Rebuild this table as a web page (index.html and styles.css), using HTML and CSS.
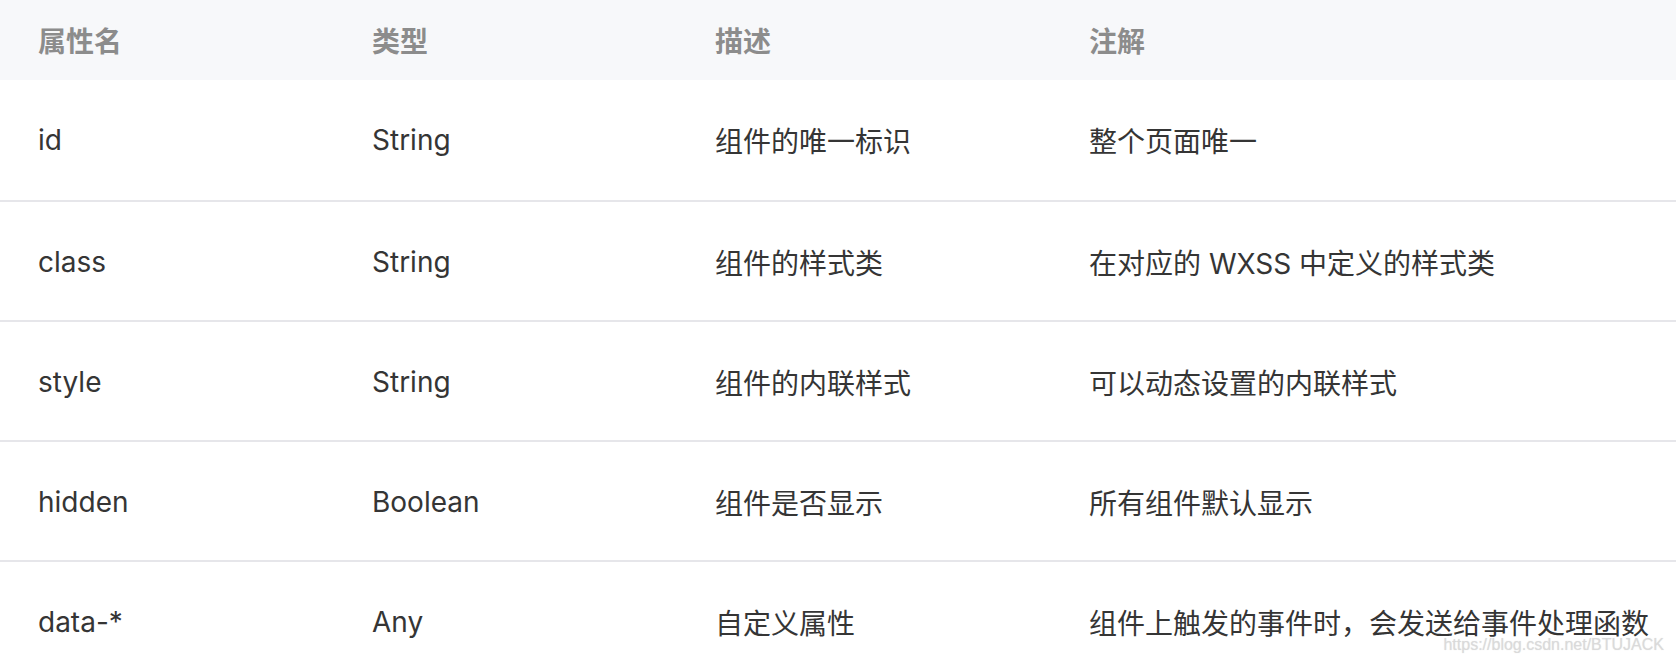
FILE: index.html
```html
<!DOCTYPE html>
<html lang="zh-CN">
<head>
<meta charset="utf-8">
<title>属性表</title>
<link rel="stylesheet" href="styles.css">
</head>
<body>
<div class="wrap">
<table class="attr-table">
  <colgroup>
    <col class="c1"><col class="c2"><col class="c3"><col class="c4">
  </colgroup>
  <thead>
    <tr><th>属性名</th><th>类型</th><th>描述</th><th>注解</th></tr>
  </thead>
  <tbody>
    <tr><td>id</td><td>String</td><td>组件的唯一标识</td><td>整个页面唯一</td></tr>
    <tr><td>class</td><td>String</td><td>组件的样式类</td><td>在对应的 WXSS 中定义的样式类</td></tr>
    <tr><td>style</td><td>String</td><td>组件的内联样式</td><td>可以动态设置的内联样式</td></tr>
    <tr><td>hidden</td><td>Boolean</td><td>组件是否显示</td><td>所有组件默认显示</td></tr>
    <tr><td>data-*</td><td>Any</td><td>自定义属性</td><td>组件上触发的事件时，会发送给事件处理函数</td></tr>
  </tbody>
</table>
<div class="watermark">https://blog.csdn.net/BTUJACK</div>
</div>
</body>
</html>
```
FILE: styles.css
```css
html, body {
  margin: 0;
  padding: 0;
  background: #ffffff;
}
.wrap {
  position: relative;
  width: 1676px;
  height: 662px;
  overflow: hidden;
}
.attr-table {
  width: 1676px;
  border-collapse: separate;
  border-spacing: 0;
  table-layout: fixed;
  font-family: Inter, "Noto Sans CJK SC", sans-serif;
  font-size: 28px;
}
.c1 { width: 334px; }
.c2 { width: 343px; }
.c3 { width: 374px; }
.c4 { width: auto; }
.attr-table th {
  height: 80px;
  padding: 0 0 0 38px;
  text-align: left;
  background: #f7f8fa;
  color: #8c8c8c;
  font-weight: 600;
  font-size: 28px;
  vertical-align: middle;
}
.attr-table td {
  box-sizing: border-box;
  height: 120px;
  padding: 0 0 0 38px;
  color: #353535;
  vertical-align: middle;
  white-space: nowrap;
}
.attr-table tbody tr + tr td {
  border-top: 2px solid #e6e6ea;
  padding-top: 2px;
}
.watermark {
  position: absolute;
  right: 12px;
  bottom: 8px;
  font-family: "Liberation Sans", Arial, sans-serif;
  font-size: 16px;
  color: rgba(218, 218, 218, 0.95);
  text-shadow: 0 0 1px rgba(150, 150, 150, 0.3);
}
```
